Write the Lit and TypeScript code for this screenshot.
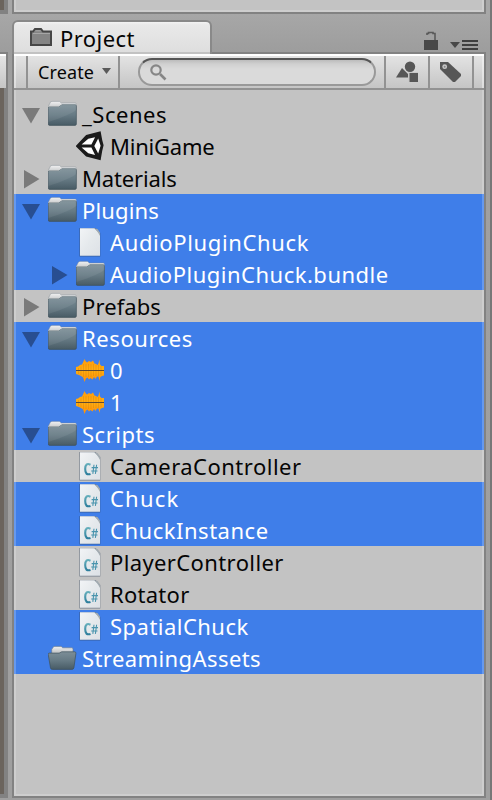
import { LitElement, html, css, svg, nothing } from "lit";
import { customElement } from "lit/decorators.js";
import { classMap } from "lit/directives/class-map.js";

type Kind = "folder" | "open" | "scene" | "file" | "audio" | "script";
interface Item {
  name: string;
  kind: Kind;
  width: number;
  depth?: number;
  arrow?: "down" | "right";
  selected?: boolean;
}

const ITEMS: Item[] = [
  { name: "_Scenes", kind: "folder", arrow: "down", width: 85 },
  { name: "MiniGame", kind: "scene", depth: 1, width: 104.5 },
  { name: "Materials", kind: "folder", arrow: "right", width: 94.7 },
  { name: "Plugins", kind: "folder", arrow: "down", selected: true, width: 77 },
  { name: "AudioPluginChuck", kind: "file", depth: 1, selected: true, width: 199 },
  { name: "AudioPluginChuck.bundle", kind: "folder", depth: 1, arrow: "right", selected: true, width: 278.7 },
  { name: "Prefabs", kind: "folder", arrow: "right", width: 79 },
  { name: "Resources", kind: "folder", arrow: "down", selected: true, width: 111 },
  { name: "0", kind: "audio", depth: 1, selected: true, width: 14 },
  { name: "1", kind: "audio", depth: 1, selected: true, width: 14 },
  { name: "Scripts", kind: "folder", arrow: "down", selected: true, width: 73 },
  { name: "CameraController", kind: "script", depth: 1, width: 191.5 },
  { name: "Chuck", kind: "script", depth: 1, selected: true, width: 69.5 },
  { name: "ChuckInstance", kind: "script", depth: 1, selected: true, width: 158.6 },
  { name: "PlayerController", kind: "script", depth: 1, width: 173.7 },
  { name: "Rotator", kind: "script", depth: 1, width: 79.5 },
  { name: "SpatialChuck", kind: "script", depth: 1, selected: true, width: 138.7 },
  { name: "StreamingAssets", kind: "open", selected: true, width: 179 },
];

const pen = document.createElement("canvas").getContext("2d")!;
/** Letter spacing that makes a label as wide as its column entry asks. */
function tracking(text: string, size: number, width: number): number {
  pen.font = `${size}px "Noto Sans"`;
  return (width - pen.measureText(text).width) / text.length;
}

const page = svg`
  <path d="M3.4 2H19.5L24.3 7V30.5H3.4Z" fill="#34475f" opacity=".55"/>
  <path d="M4 2.3H18.5L24 7.5V29.8H4Z" fill="url(#paper)"/>
  <path d="M17.5 2.3Q21 4 24 10V6.5L21.5 2.9Z" fill="#a2abb1"/>`;

const ICONS = {
  folder: svg`
    <path d="M.2 8.5 2 5Q2.3 3.4 4 3.4H11.5L13.3 5H27.3Q28.3 5 28.3 6.3V12H.2Z" fill="url(#tab)" stroke="#7b868d" stroke-width=".4"/>
    <path d="M.2 10.3Q.2 9 1.5 9H10.7L14 6.8H27Q28.4 6.8 28.4 8.2V26Q28.4 27.4 27 27.4H1.6Q.2 27.4 .2 26Z" fill="url(#folder)" stroke="#3d4d58" stroke-width=".6"/>
    <path d="M.4 10.3Q.4 9.2 1.5 9.2H10.8L14.1 7H27Q28.2 7 28.2 8.2V12Q22 17 .4 24Z" fill="#fff" opacity=".07"/>
    <path d="M1 9.3H11L14.3 7.1H28" fill="none" stroke="#8fa0a7" stroke-width=".7"/>`,
  open: svg`<g transform="translate(-.8 2.2)">
    <path d="M4.5 10V5.5Q4.5 4.5 5.2 4.4L5.8 3.4Q6.2 2.2 7.6 2.2H14L15.5 3.6H24.5Q25.8 3.6 25.8 5V10Z" fill="url(#tab)" stroke="#6c7a85" stroke-width=".6"/>
    <path d="M1 10.1Q1 8.9 2.2 8.9H12L14.5 7.6H27.5Q29 7.8 28.7 9.3L26.7 23.7Q26.2 25.2 24.7 25.2H5.3Q3.6 25.2 3.3 23.7Z" fill="url(#folder)" stroke="#3f525d" stroke-width=".7"/></g>`,
  file: page,
  script: svg`${page}
    <path d="M14.5 14.7Q9.2 12.3 9.2 19Q9.2 25.8 14.5 23.9" fill="none" stroke="url(#teal)" stroke-width="2.1"/>
    <path d="M18 14.8 16.8 23.9M20.6 14.8 19.4 23.9M15.6 17.6H22M15.2 21H21.5" fill="none" stroke="#4994ad" stroke-width="1.1"/>`,
  scene: svg`<g transform="translate(-.4 1)">
    <path d="M0 15.2 10.5 4.1 25 .3 26.6 9 28 14.2 26.6 20 25 29.2 10.5 25.5Z" fill="#1b1b1b"/>
    <path d="M6 13.4 12.7 7.8 19.5 6.3 15.8 13.4ZM6 16.6H15.8L19.5 23.9 12.7 22.2ZM22.6 7.4 25 14.7 22.6 22.4 18.7 15Z" fill="#fff"/></g>`,
  audio: svg`<g transform="translate(0 2)">
    <path d="M0 11 2 10.5 4 9 6 8.5 7.2 6 8.5 3 9.5 5 11 6.5 13 5 15 6 17 4.5 18.5 7.5 20 8 21.7 9 22.5 7.5 23.4 3.5 24 8.5 25.5 10 28 10V19.5L26 20 24.3 21 23.5 25 22.5 20.5 21 20.5 19.5 23 18 21 16.5 23.5 14.5 22 13 23.5 11.5 21.5 10 22.5 8.5 26 7.2 21.5 5 20 3 19 1.5 18.5 0 18Z" fill="url(#wave)"/>
    <path d="M2.5 12V18M5 10.5V19M7.5 8V21M10 8V21M12.5 8V21M15 8V21M17.5 8V20M20 9V20M22.5 9V20M25 10.5V19" stroke="#c97a08" opacity=".45" stroke-width=".7"/>
    <path d="M0 14.5H28" stroke="#5f4a35"/></g>`,
};

@customElement("app-root")
export class AppRoot extends LitElement {
  static styles = css`
    :host { display: block; width: 492px; height: 800px; overflow: hidden; font-family: "Noto Sans", sans-serif; color: #050505; }
    * { box-sizing: border-box; }
    svg { display: block; flex: none; }
    .defs { height: 0; width: 0; position: absolute; }
    .window { display: flex; height: 800px; background: linear-gradient(#a7a7a7 14px, #9d9d9d 52px, #a0a0a0 90px, #9f9f9f); }
    .side { width: 8px; margin-right: 4px; display: flex; flex-direction: column; }
    .view { background: #6b645d; border-right: 4px solid #828282; }
    .view.upper { height: 14px; border-bottom: 4px solid #828282; margin-bottom: 38px; }
    .sidebar-bar { height: 36px; border: solid #828282; border-width: 2px 2px 0 0; background: linear-gradient(#fff 2px, #e5e5e5 2px, #c6c6c6); }
    .view.lower { height: 710px; border-bottom: 4px solid #828282; }
    .main { width: 474px; display: flex; flex-direction: column; }
    .above { height: 14px; border: 2px solid #828282; border-top: 0; background: #c3c3c3; box-shadow: inset -2px -2px #cecece, inset 2px 0 #cecece; }
    .strip { height: 38px; display: flex; align-items: flex-end; justify-content: space-between; padding-right: 8px; }
    .tab { width: 200px; height: 34px; margin-bottom: -2px; position: relative; z-index: 1; border: 2px solid #898989; border-bottom: 0; border-radius: 6px 6px 0 0; background: linear-gradient(#f3f3f3, #e9e9e9 3px, #dedede 30px, #c2c2c2 30px); display: flex; padding: 5px 0 0 16px; }
    .tab .label { line-height: 28px; margin: -3px 0 0 7px; }
    .controls { display: flex; align-items: flex-end; padding-bottom: 1px; gap: 12px; }
    .controls .lock { margin-bottom: 1px; }
    .panel { height: 746px; display: flex; flex-direction: column; border: 2px solid #828282; background: #c3c3c3; }
    .toolbar { height: 36px; flex: none; display: flex; border-bottom: 2px solid #929292; background: linear-gradient(#fff 2px, #e3e3e3 2px, #c5c5c5); padding: 2px 0 0 12px; box-shadow: inset 2px 0 #ffffff66, inset -2px 0 #ffffff66; }
    .create { width: 94px; border: solid #929292; border-width: 0 2px; display: flex; padding: 0 7px 0 10px; justify-content: space-between; font-size: 18px; line-height: 32px; white-space: pre; }
    .create svg { margin-top: 12px; }
    .search { width: 238px; height: 28px; margin: 2px 8px 0 18px; border-radius: 14px; border: 2px solid #999; border-top-color: #555; background: linear-gradient(#bcbcbc, #d0d0d0 4px, #dadada 9px, #dadada); padding: 4px 0 0 10px; }
    .tool { width: 44px; border-left: 2px solid #929292; padding: 5px 0 0 10px; }
    .tool.last { width: 46px; border-right: 2px solid #929292; padding-left: 9px; }
    .body { flex: 1; padding-top: 8px; box-shadow: inset 2px 0 #cecece, inset -2px -2px #cecece; }
    .row { height: 32px; display: flex; align-items: center; padding-left: 6px; line-height: 32px; }
    .row.nested { padding-left: 34px; }
    .selected { color: #fff; background: #3f7ee9; box-shadow: inset 2px 0 #6699ee, inset -2px 0 #6699ee; }
    .arrow { width: 28px; fill: #7a7a7a; }
    .selected .arrow { fill: #284e91; }
    .label { font-size: 22px; white-space: pre; margin-left: 4px; }
    .edge { width: 2px; margin-left: 4px; background: #777; }
  `;

  private text(value: string, size: number, width: number) {
    return html`<span class="label" style="letter-spacing:${tracking(value, size, width).toFixed(3)}px">${value}</span>`;
  }

  private row(item: Item) {
    return html`<div class=${classMap({ row: true, nested: !!item.depth, selected: !!item.selected })}>
      <svg class="arrow" width="28" height="32">
        ${item.arrow === "down" ? svg`<path d="M2 10H20L11 25.5Z"/>` : item.arrow === "right" ? svg`<path d="M4 8V26.5L19.5 17Z"/>` : nothing}
      </svg>
      <svg width="30" height="32" viewBox="0 0 30 32">${ICONS[item.kind]}</svg>
      ${this.text(item.name, 22, item.width)}
    </div>`;
  }

  render() {
    return html`
      <div class="window">
        <div class="side">
          <div class="view upper"></div>
          <div class="sidebar-bar"></div>
          <div class="view lower"></div>
        </div>
        <div class="main">
          <div class="above"></div>
          <div class="strip">
            <div class="tab">
              <svg width="23" height="20"><path d="M1 4.5H3L5 2H11L13 4.5H21V18H1Z" fill="#858585" stroke="#464646" stroke-width="2"/><path d="M3 6.5H20M5.5 3.8H10.5" stroke="#a6a6a6"/></svg>
              ${this.text("Project", 22, 75)}
            </div>
            <div class="controls">
              <svg class="lock" width="14" height="19"><path d="M0 9H14V19H0Z" fill="#484848"/><path d="M3 4V2.5H4.5V1.5H9V2.5H11V9" fill="none" stroke="#5a5a5a" stroke-width="1.6"/></svg>
              <svg width="28" height="12"><path d="M0 3H10L5 9Z" fill="#484848"/><path d="M12 2H28M12 6H28M12 10H28" stroke="#3f3f3f" stroke-width="2"/></svg>
            </div>
          </div>
          <div class="panel">
            <div class="toolbar">
              <div class="create">
                <span style="letter-spacing:${tracking("Create", 18, 56).toFixed(3)}px">Create</span>
                <svg width="10" height="6"><path d="M1 0H10L5.5 6Z" fill="#5a5a5a"/></svg>
              </div>
              <div class="search">
                <svg width="18" height="18"><circle cx="6" cy="6" r="4.7" fill="none" stroke="#868686" stroke-width="2.2"/><path d="M10 10 15.5 15.5" stroke="#868686" stroke-width="2.6"/></svg>
              </div>
              <div class="tool">
                <svg width="24" height="22" fill="#575757"><path d="M0 16.5 6 7 12 13V16.5Z"/><circle cx="14" cy="5.8" r="5.2"/><path d="M12 11H22V21H12Z" fill="#c9c9c9"/><path d="M13.5 12H22V21H13.5Z"/></svg>
              </div>
              <div class="tool last">
                <svg width="24" height="22"><path d="M1 1H9L22 13V15L16 21H14L1 8Z" fill="#575757"/><circle cx="5.7" cy="5.7" r="2.4" fill="#c9c9c9"/><circle cx="5.7" cy="5.7" r="1" fill="#888"/></svg>
              </div>
            </div>
            <div class="body">${ITEMS.map((item) => this.row(item))}</div>
          </div>
        </div>
        <div class="edge"></div>
      </div>
      <svg class="defs">
        <linearGradient id="folder" x2="0" y2="1"><stop stop-color="#7c8e97"/><stop offset=".5" stop-color="#667a84"/><stop offset="1" stop-color="#485b65"/></linearGradient>
        <linearGradient id="tab" x2="0" y2="1"><stop stop-color="#f1f1f1"/><stop offset="1" stop-color="#b5b9bb"/></linearGradient>
        <linearGradient id="paper" x2="1" y2="1"><stop stop-color="#f2f4f6"/><stop offset=".5" stop-color="#e5e9ec"/><stop offset="1" stop-color="#dde1e6"/></linearGradient>
        <linearGradient id="teal" x2="0" y2="1"><stop stop-color="#65aebb"/><stop offset="1" stop-color="#2e7f9d"/></linearGradient>
        <linearGradient id="wave" x2="0" y2="1"><stop stop-color="#ff9a08"/><stop offset=".5" stop-color="#ffae13"/><stop offset="1" stop-color="#ff8d05"/></linearGradient>
      </svg>`;
  }
}
